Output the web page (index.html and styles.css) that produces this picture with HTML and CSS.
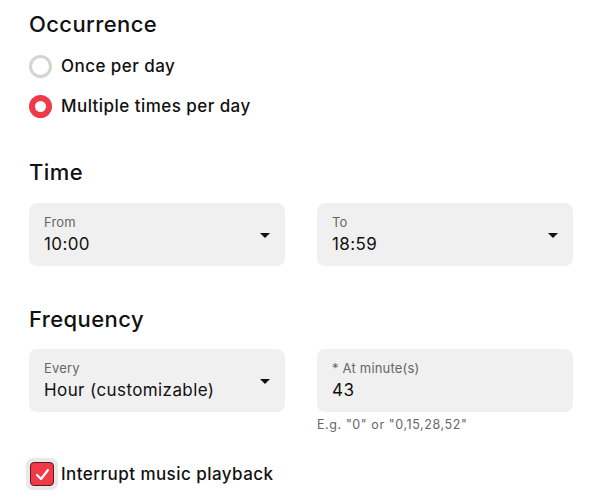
FILE: index.html
```html
<!DOCTYPE html>
<html>
<head>
<meta charset="utf-8">
<link rel="stylesheet" href="styles.css">
</head>
<body>
<div class="page">
  <h2 class="heading first">Occurrence</h2>
  <div class="radio-row">
    <span class="radio"></span>
    <span class="opt">Once per day</span>
  </div>
  <div class="radio-row">
    <span class="radio selected"></span>
    <span class="opt">Multiple times per day</span>
  </div>

  <h2 class="heading time">Time</h2>
  <div class="grid time-grid">
    <div class="field">
      <div class="field-text">
        <div class="label">From</div>
        <div class="value">10:00</div>
      </div>
      <span class="arrow"></span>
    </div>
    <div class="field">
      <div class="field-text">
        <div class="label">To</div>
        <div class="value">18:59</div>
      </div>
      <span class="arrow"></span>
    </div>
  </div>

  <h2 class="heading freq">Frequency</h2>
  <div class="grid freq-grid">
    <div class="col">
      <div class="field">
        <div class="field-text">
          <div class="label">Every</div>
          <div class="value">Hour (customizable)</div>
        </div>
        <span class="arrow"></span>
      </div>
    </div>
    <div class="col">
      <div class="field">
        <div class="field-text">
          <div class="label">* At minute(s)</div>
          <div class="value">43</div>
        </div>
      </div>
      <div class="helper">E.g. "0" or "0,15,28,52"</div>
    </div>
  </div>

  <div class="check-row">
    <span class="check-halo">
      <span class="check">
        <svg width="17" height="17" viewBox="0 0 17 17"><path d="M3 9 L7 13 L14 4" fill="none" stroke="#fff" stroke-width="2.2" stroke-linecap="round" stroke-linejoin="round"/></svg>
      </span>
    </span>
    <span class="opt">Interrupt music playback</span>
  </div>
</div>
</body>
</html>
```
FILE: styles.css
```css
html, body {
  margin: 0;
  padding: 0;
  background: #fff;
}
body {
  font-family: "Inter", "Liberation Sans", sans-serif;
  color: #111;
}
.page {
  padding: 0 35px 0 29px;
  width: 544px;
}
.heading {
  font-size: 22px;
  font-weight: 500;
  margin: 0;
  line-height: 28px;
  letter-spacing: 0.4px;
}
.heading.first {
  padding-top: 10px;
}
.heading.time {
  padding-top: 40px;
}
.heading.freq {
  padding-top: 39px;
}
.radio-row {
  display: flex;
  align-items: center;
  gap: 9px;
  height: 24px;
  margin-top: 16px;
}
.radio-row + .radio-row {
  margin-top: 16px;
}
.radio {
  box-sizing: border-box;
  width: 23px;
  height: 23px;
  border-radius: 50%;
  border: 3px solid #d4d4d4;
}
.radio.selected {
  border: 6px solid #f03a48;
}
.opt {
  font-size: 17px;
  font-weight: 500;
  color: #111;
  letter-spacing: 0.45px;
}
.grid {
  display: grid;
  grid-template-columns: 1fr 1fr;
  column-gap: 32px;
}
.time-grid {
  margin-top: 17px;
}
.freq-grid {
  margin-top: 16px;
}
.field {
  background: #f0f0f0;
  border-radius: 8px;
  height: 63px;
  box-sizing: border-box;
  padding: 11px 15px 0 15px;
  display: flex;
  justify-content: space-between;
  align-items: center;
}
.field-text {
  align-self: flex-start;
}
.label {
  font-size: 13px;
  color: #666;
  line-height: 16px;
  letter-spacing: 0.2px;
}
.value {
  font-size: 17px;
  color: #111;
  line-height: 24px;
  margin-top: 2px;
  letter-spacing: 0.4px;
}
.arrow {
  width: 0;
  height: 0;
  border-left: 5px solid transparent;
  border-right: 5px solid transparent;
  border-top: 5px solid #111;
  margin-bottom: 9px;
}
.helper {
  font-size: 12.5px;
  color: #666;
  margin-top: 5px;
  line-height: 16px;
  letter-spacing: 0.6px;
}
.check-row {
  display: flex;
  align-items: center;
  gap: 3px;
  margin-top: 25px;
  margin-left: -3px;
}
.check-halo {
  width: 32px;
  height: 32px;
  border-radius: 7px;
  background: #e8e8e8;
  display: flex;
  align-items: center;
  justify-content: center;
}
.check {
  box-sizing: border-box;
  width: 24px;
  height: 24px;
  border-radius: 4px;
  background: #f03a48;
  border: 1px solid #5a1c22;
  display: flex;
  align-items: center;
  justify-content: center;
}
.check svg {
  display: block;
}
```
